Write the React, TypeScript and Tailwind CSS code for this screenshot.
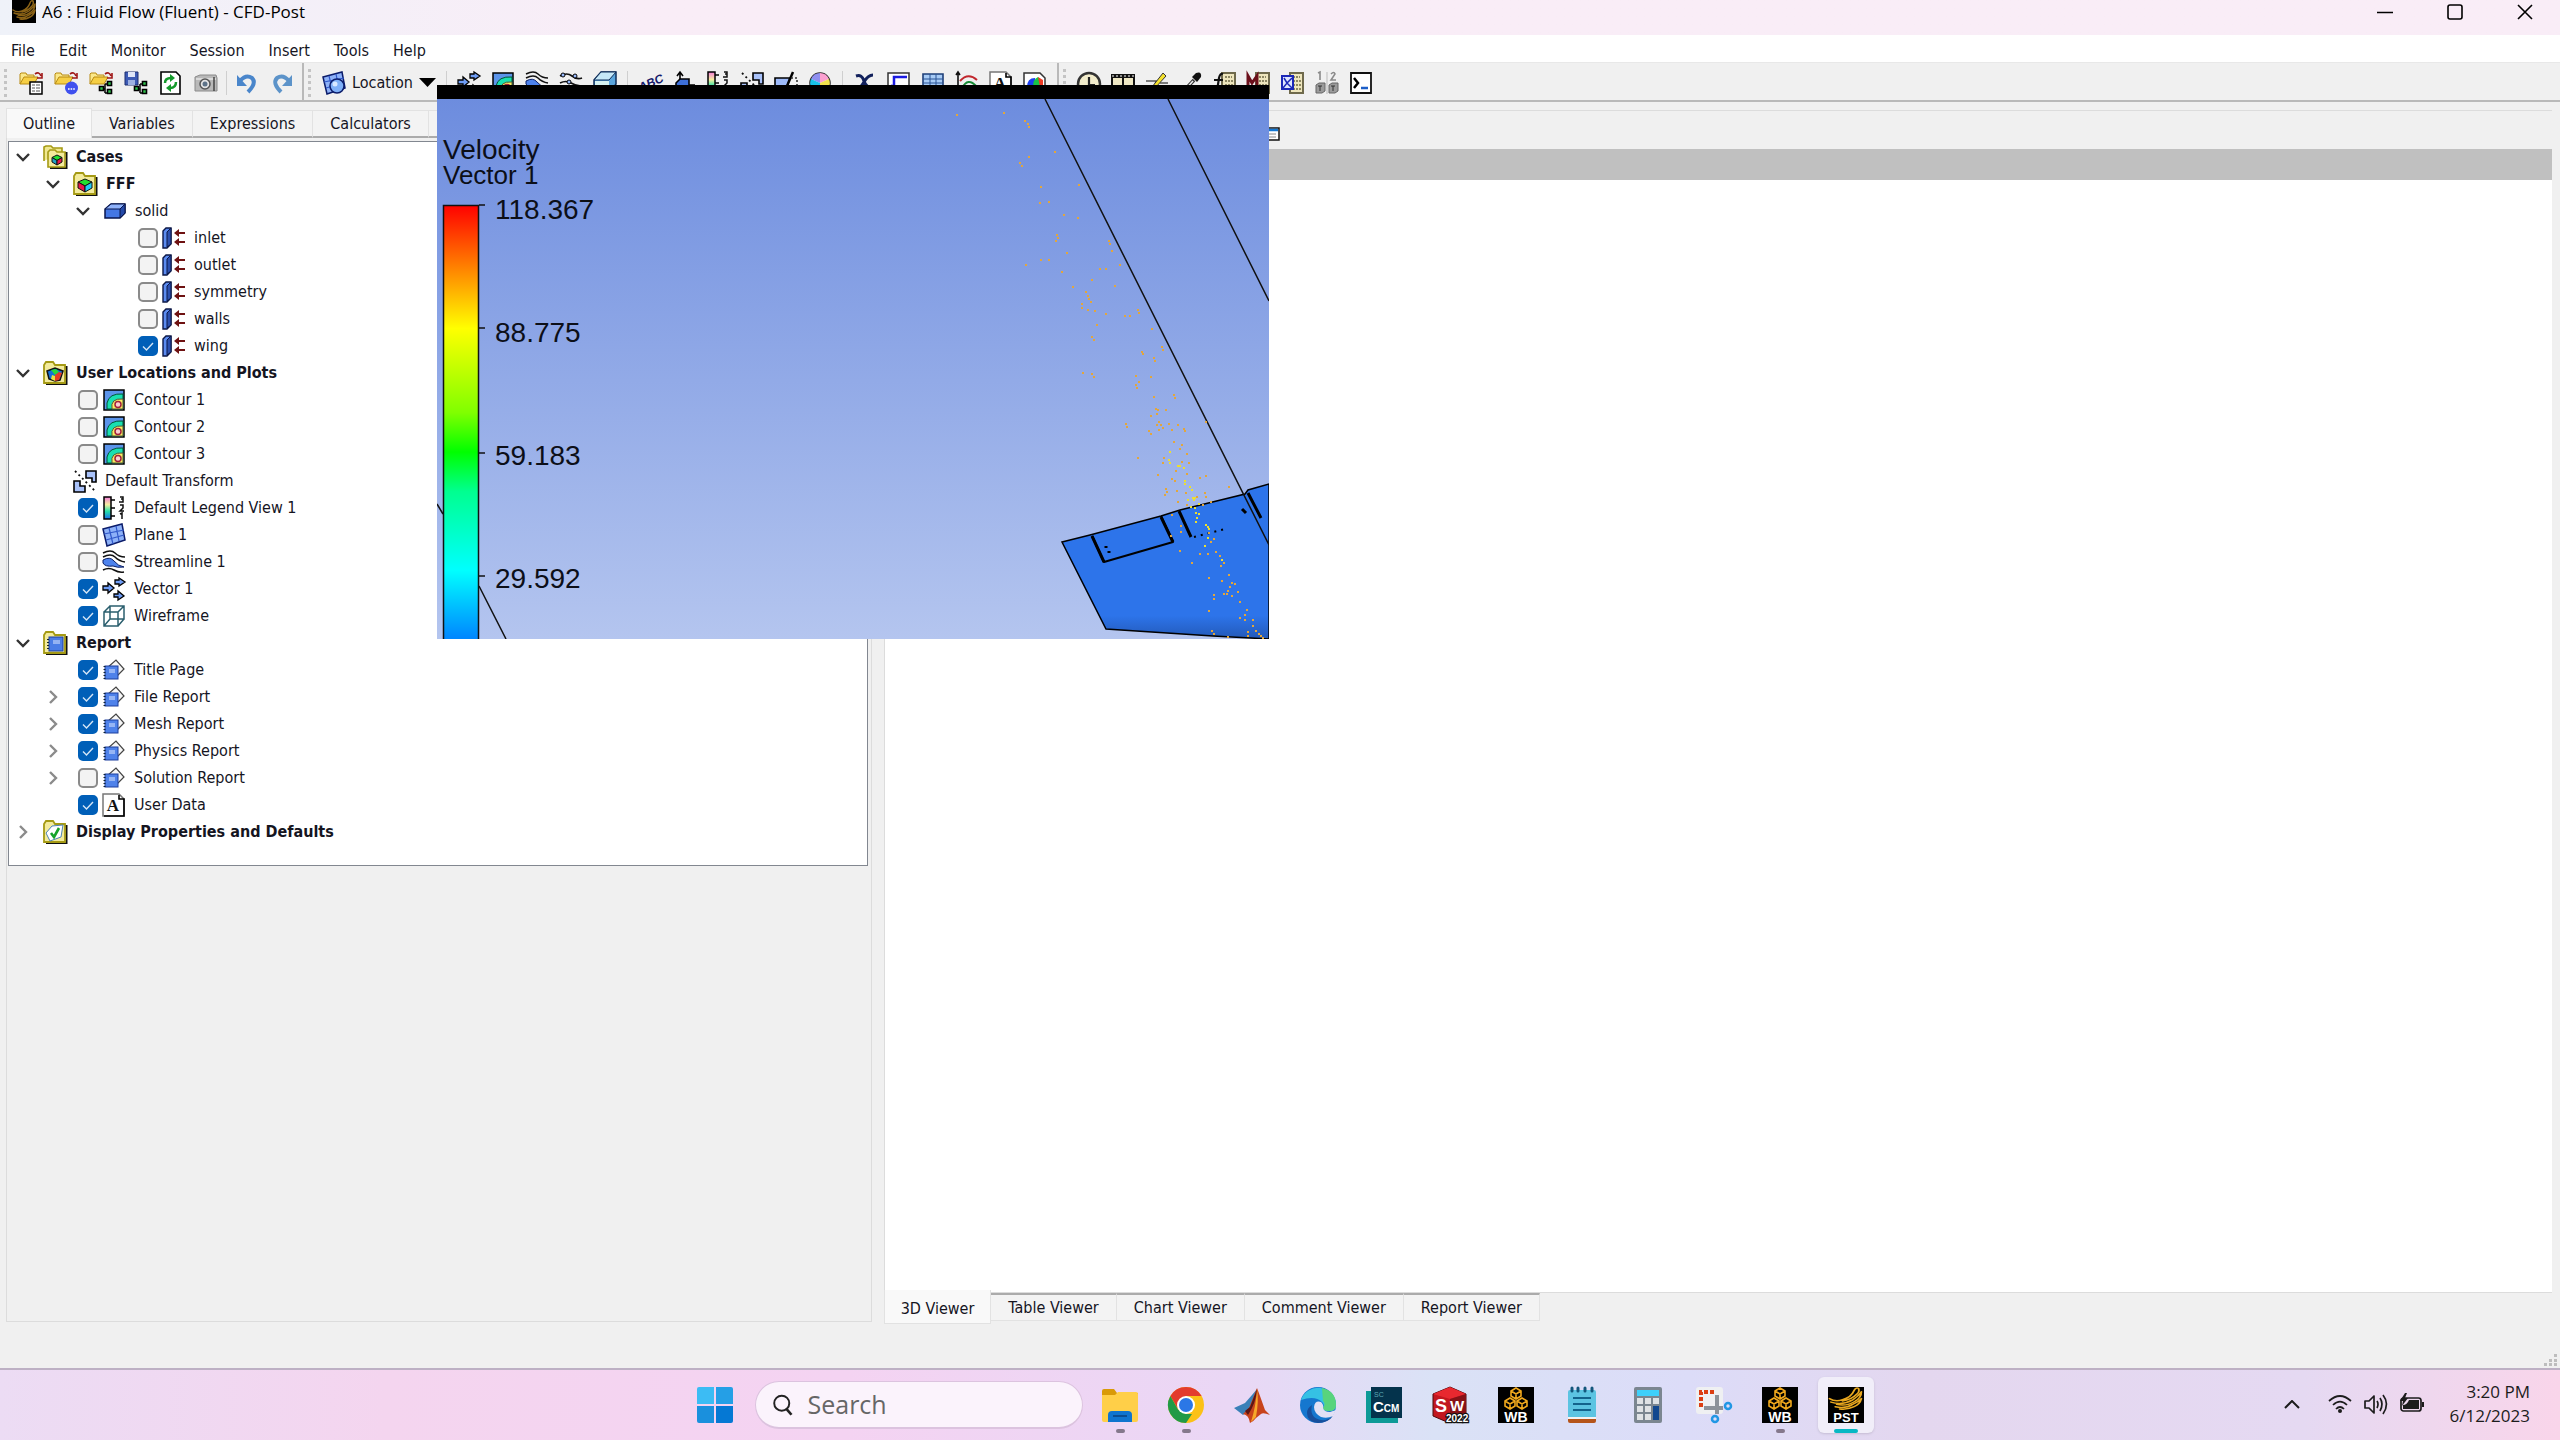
import { useState } from "react";
import type { ReactNode } from "react";

type IconProps = { children: ReactNode; className?: string };

function Icon({ children, className = "size-6 shrink-0 overflow-visible" }: IconProps) {
  return (
    <svg viewBox="0 0 24 24" className={className} fill="none" aria-hidden="true">
      {children}
    </svg>
  );
}

function OpenFolder() {
  return (
    <>
      <path d="M1 13V3l1-1h5l1 2h7v4" fill="#fbe88a" stroke="#b88a12" />
      <path d="M1 13 5 6h14l-4 7z" fill="#f6cf45" stroke="#b88a12" />
      <path d="M16 3q4-3 6 2m1-3v5h-5" stroke="#a01818" strokeWidth="1.6" />
    </>
  );
}

function Network() {
  return (
    <>
      <path d="M13 18h3m0-5v9m0-9h3m-3 9h3" stroke="#000" strokeWidth="1.5" />
      <path d="M10.500 15.500h4v4h-4zM18.500 10.500h4v4h-4zM18.500 18.500h4v4h-4z" fill="#2fc24a" stroke="#000" strokeWidth="1.6" />
    </>
  );
}

// stroke colour and width come from the parent group
const swirl = (
  <g strokeLinecap="round" strokeLinejoin="round">
    <path d="M1 11q4 3 9 1 6-2 8-8 1-3 3-2 1 3-1 5-4 5-10 6" />
    <path d="M2 14q8 3 15-2 4-3 6-7 0 5-4 8-6 5-13 3" />
    <path d="M5 18q7 2 12-2 4-2 6-5-1 5-5 7-5 3-10 2" />
  </g>
);

const contour = (
  <>
    <path d="M2 2h20v20H2z" fill="#5b94ea" stroke="#000" strokeWidth="1.500" />
    <path d="M5 21V15Q7 5 21 6v15z" fill="#19e0b0" stroke="#053" />
    <path d="M10 21q-2-11 11-10v10z" fill="#f6ee62" stroke="#553" />
    <circle cx="16" cy="16.500" r="3" fill="#fbd0d0" stroke="#a3203a" strokeWidth="1.500" />
  </>
);

const streamline = (
  <>
    <path d="M1 10q7-4 11 1 4 5 10 6-7 1-11-1-8 1-10-3z" fill="#4d83ee" stroke="#0a1f66" />
    <path d="M1 3q8-4 12 0t10 4M1 7q8-4 12 0t10 5M1 20q6-3 11 0t10 2" stroke="#111" strokeWidth="1.500" />
  </>
);

const vectors = (
  <path
    d="M1 9h5V6l6 5-6 5v-3H1zM13 3h4V1l6 4-6 4V7h-4zM12 17h4v-3l6 5-6 4v-3h-4z"
    fill="#6f9df5"
    stroke="#000"
    strokeWidth="1.300"
  />
);

const legend = (
  <>
    <rect x="2" y="1" width="7" height="22" fill="url(#legendStrip)" stroke="#000" strokeWidth="1.500" />
    <path d="M9 4h4M9 12h4M9 20h4" stroke="#000" strokeWidth="1.500" />
    <path d="M18 1h3v2h-2 2v3h-4M18 9h3v3l-3 3h4M18 18l2-1v6" stroke="#111" strokeWidth="1.500" />
  </>
);

const transform = (
  <>
    <path d="M13 2h10v11h-4V9h-6zM1 12h6v5h5v6H1z" fill="#a9c2fa" stroke="#000" strokeWidth="1.600" />
    <path d="M2 2l20 20" stroke="#111" strokeWidth="1.800" strokeDasharray="2 3" />
  </>
);

const plane = (
  <>
    <path d="M1 6 20 1l3 16L5 23z" fill="#8db1f8" stroke="#0b1c6a" strokeWidth="1.500" />
    <path d="M2 11l20-4M4 17l18-5M7 5l4 16M14 3l3 15" stroke="#2f57c9" strokeWidth="1.200" />
  </>
);

const wire = (
  <path d="M2 8h14v14H2zM8 2h14v13H8zM2 8l6-6M16 8l6-6M2 22l6-7M16 22l6-7" stroke="#2b5f6e" strokeWidth="1.500" />
);

const solid = (
  <>
    <path d="M2 10 8 5h14v9l-5 5H2z" fill="#4477e4" stroke="#08164d" strokeWidth="1.500" />
    <path d="M2 10 8 5h14l-5 5z" fill="#8fb2fa" stroke="#08164d" />
    <path d="M17 10v9l5-5V5z" fill="#2349a8" stroke="#08164d" />
  </>
);

const boundary = (
  <>
    <path d="M1 5 4 2h5v16l-4 4H1z" fill="#5b8bf0" stroke="#0b1746" strokeWidth="1.400" />
    <path d="M5 6v15l4-3V2z" fill="#2b4fae" stroke="#0b1746" />
    <path d="M14 7h9M14 16h9" stroke="#6e1212" strokeWidth="1.800" />
    <path d="M12 7l5-4v8zM12 16l5-4v8z" fill="#6e1212" />
  </>
);

const folderBase = (
  <>
    <path d="M22 6h1.500v17H3" stroke="#111" strokeWidth="2" />
    <path d="M1 22V4l2-3h7l2 3h10v18z" fill="#f3eb9c" stroke="#a59a14" strokeWidth="1.800" />
  </>
);

const cubeFolder = (
  <>
    {folderBase}
    <path d="M12 7l7 3-7 4-7-4z" fill="#1fe02f" stroke="#111" />
    <path d="M5 10l7 4v6l-7-4z" fill="#e8174b" stroke="#111" />
    <path d="M19 10l-7 4v6l7-4z" fill="#21cdf5" stroke="#111" />
  </>
);

const plotsFolder = (
  <>
    {folderBase}
    <path d="M4 10l8-3 8 3-3 9-5 1-6-2z" fill="#1470d8" stroke="#111" strokeWidth="1.500" />
    <path d="M8 9l5-1 3 3-4 3z" fill="#25d83a" />
    <path d="M12 14l4-3 3 1-3 7-4 1z" fill="#e53c24" />
    <path d="M9 14l3 1v5l-4-2z" fill="#e8e33e" />
  </>
);

const casesFolder = (
  <>
    <path d="M1 16V2l2-1h5l2 2h9v4" fill="#f0e890" stroke="#a59a14" strokeWidth="1.600" />
    <path d="M22 8h1.500v15H7" stroke="#111" strokeWidth="2" />
    <path d="M5 22V7l2-2h5l2 2h8v15z" fill="#f3eb9c" stroke="#a59a14" strokeWidth="1.600" />
    <path d="M14 10l5 2.500-5 3-5-3z" fill="#1fe02f" stroke="#111" />
    <path d="M9 12.500l5 3V20l-5-3z" fill="#21a0c5" stroke="#111" />
    <path d="M19 12.500l-5 3V20l5-3z" fill="#e8174b" stroke="#111" />
  </>
);

const reportFolder = (
  <>
    {folderBase}
    <rect x="6" y="6" width="14" height="14" fill="#4b7de6" stroke="#1c3f9e" />
    <path d="M10 10h7M10 12h7" stroke="#dfe9ff" />
    <path d="M5 8v12" stroke="#123" strokeWidth="2" strokeDasharray="1 2" />
  </>
);

const checkFolder = (
  <>
    {folderBase}
    <path d="M9 6l11-1-2 12-11 4-4-8z" fill="#fff" stroke="#4c82b8" />
    <path d="M8 13l3 4 5-9" stroke="#17a32a" strokeWidth="2.600" />
  </>
);

const reportPage = (
  <>
    <path d="M5 10l9-8 8 9-8 8" fill="#f7f7f7" stroke="#444" strokeWidth="1.200" />
    <rect x="3" y="8" width="13" height="13" fill="#4f82ea" stroke="#1c3f9e" />
    <path d="M7 12h6M7 14h6" stroke="#dfe9ff" />
    <path d="M2.500 8v14" stroke="#123" strokeWidth="2" strokeDasharray="1 2" />
  </>
);

const letterPage = (
  <>
    <path d="M1 1h16l5 5v17H1z" fill="#fff" stroke="#777" strokeWidth="1.500" />
    <path d="M17 2v4h5v17H2" stroke="#000" strokeWidth="1.600" />
    <text x="11" y="18" textAnchor="middle" fontFamily="Liberation Serif, serif" fontSize="17" fontWeight="700" fill="#111">A</text>
  </>
);

const calcPad = (
  <>
    <path d="M9 2h13v20H9z" fill="#eee6bd" stroke="#6f6a4c" strokeWidth="2" />
    <path d="M12 6h7M12 10h8M12 14h8M12 18h8" stroke="#8d8763" strokeWidth="2" strokeDasharray="2 1" />
  </>
);

const fileTools = [
  { name: "Load results", icon: <><OpenFolder /><path d="M11 11h12v12H11z" fill="#fff" stroke="#000" strokeWidth="1.500" /><path d="M13 14h3m1 0h4m-8 3h3m1 0h4m-8 3h3m1 0h4" stroke="#555" /></> },
  { name: "Load state", icon: <><OpenFolder /><circle cx="17.500" cy="17" r="6.500" fill="#3f50ee" /><path d="M14 18h7" stroke="#fff" strokeWidth="1.600" strokeDasharray="1.600 1" /></> },
  { name: "Load session", icon: <><OpenFolder /><Network /></> },
  { name: "Save state", icon: <><path d="M1 1h13v13H1z" fill="#3d5bb5" stroke="#1d2f70" /><path d="M4 1h7v5H4z" fill="#dfe6f8" /><path d="M4 9h7v5H4z" fill="#9fb2e2" /><Network /></> },
  { name: "Refresh", icon: <><path d="M2 1h15l4 4v18H2z" fill="#fff" stroke="#000" strokeWidth="1.600" /><path d="M6 12q0-5 6-5M17 11q0 6-6 6" stroke="#159a2c" strokeWidth="2.500" /><path d="M11 3l5 4-5 4zM12 13l-5 4 5 4z" fill="#159a2c" /></> },
  { name: "Save picture", icon: <><path d="M1 6l5-2h16l1 3v13H1z" fill="#b9b9b9" stroke="#8a8a8a" /><path d="M2 8h20" stroke="#e6e6e6" strokeWidth="1.500" /><circle cx="11" cy="13" r="5" fill="#e4e4e4" stroke="#555" strokeWidth="1.500" /><circle cx="11" cy="13" r="2.500" fill="#5e7388" /><path d="M20 6v14" stroke="#444" strokeWidth="1.500" /></> },
];

const historyTools = [
  { name: "Undo", icon: <><path d="M5 10q6-7 12-3 5 5-4 14" stroke="#4a86cb" strokeWidth="4" /><path d="M2 4v11h10z" fill="#4a86cb" /></> },
  { name: "Redo", icon: <><path d="M19 10q-6-7-12-3-5 5 4 14" stroke="#5c93c9" strokeWidth="4" /><path d="M22 4v11H12z" fill="#5c93c9" /></> },
];

const plotTools = [
  { name: "Vector", icon: vectors },
  { name: "Contour", icon: contour },
  { name: "Streamline", icon: streamline },
  { name: "Particle track", icon: <><path d="M1 5q7-4 12 0t10 2M1 12q6-3 11 0t10 3" stroke="#111" strokeWidth="1.700" /><circle cx="4" cy="4" r="2" fill="#9bf" stroke="#000" /><circle cx="16" cy="5" r="2" fill="#9bf" stroke="#000" /><circle cx="10" cy="11" r="2" fill="#9bf" stroke="#000" /></> },
  { name: "Volume rendering", icon: <><path d="M1 9 8 1h15v12l-7 10H1z" fill="#5aa5dc" stroke="#0e2c58" strokeWidth="1.500" /><path d="M1 9 8 1h15l-7 8z" fill="#c6e8f7" stroke="#0e2c58" /><path d="M2 10h14v12H2z" fill="#d6f2f2" /></> },
];

const annotateTools = [
  { name: "Text", icon: <text x="1" y="19" fontFamily="Liberation Sans, sans-serif" fontSize="12" fontWeight="700" fontStyle="italic" fill="#14186b" transform="rotate(-24 6 16)">ABC</text> },
  { name: "Coordinate frame", icon: <><path d="M8 12V2M5 5l3-4 3 4M16 14h7M2 20l5-4" stroke="#000" strokeWidth="1.600" /><path d="M4 12l4-4h9v9l-4 4H4z" fill="#3d6fd8" stroke="#000" strokeWidth="1.600" /></> },
  { name: "Legend", icon: legend },
  { name: "Instance transform", icon: transform },
  { name: "Clip plane", icon: <><path d="M1 7h15l-5 14H1z" fill="#9dbafa" stroke="#000" strokeWidth="1.600" /><path d="M10 22 19 1" stroke="#000" strokeWidth="2.500" /><path d="M17 7h6v14H12" stroke="#333" strokeWidth="1.600" strokeDasharray="2 2" /></> },
  { name: "Color map", icon: <><circle cx="12" cy="12" r="10" fill="#fff" stroke="#222" strokeWidth="1.500" /><path d="M12 12V2a10 10 0 0 1 9 6z" fill="#fba0d0" /><path d="M12 12 3 8a10 10 0 0 1 9-6z" fill="#8f8ff0" /><path d="M12 12 21 8a10 10 0 0 1-9 14z" fill="#f2e34c" /><path d="M12 12v10A10 10 0 0 1 3 8z" fill="#19c2e8" /></> },
];

const dataTools = [
  { name: "Variable", icon: <path d="M3 5q6-2 8 5t10 8M20 4q-5 0-9 7t-8 8" stroke="#12215c" strokeWidth="3" /> },
  { name: "Expression", icon: <><path d="M1 2h21v20H1z" fill="#fff" stroke="#333" strokeWidth="1.500" /><path d="M4 14l3 5V6h13" stroke="#1a1ae0" strokeWidth="2.500" /></> },
  { name: "Table", icon: <><path d="M2 3h20v18H2z" fill="#a7cbf5" stroke="#1e3f78" strokeWidth="1.600" /><path d="M2 8h20M2 12h20M2 16h20M9 3v18M15 3v18" stroke="#2a5596" /></> },
  { name: "Chart", icon: <><path d="M3 1v22h20M1 4l2-3 2 3" stroke="#111" strokeWidth="1.600" /><path d="M5 10q8-9 17-1" stroke="#c1272d" strokeWidth="2" /><path d="M7 17q6-11 14-2" stroke="#178a35" strokeWidth="2" /></> },
  { name: "Comment", icon: letterPage },
  { name: "Figure", icon: <><path d="M1 2h16l5 5v15H1z" fill="#fff" stroke="#333" strokeWidth="1.500" /><path d="M4 16q0-9 8-9v9z" fill="#1b3ff0" /><path d="M10 16q0-8 5-10l4 4v6z" fill="#18c545" /><path d="M15 6l5 3v7h-3z" fill="#ef3b24" /></> },
];

const utilityTools = [
  { name: "Timestep selector", icon: <><circle cx="12" cy="13" r="11" fill="#f2eccb" stroke="#333" strokeWidth="2.500" /><path d="M12 6v8h6" stroke="#222" strokeWidth="2.200" /></> },
  { name: "Animation", icon: <><path d="M0 3h24v19H0z" fill="#111" /><path d="M2 7h9v11H2zM13 7h9v11h-9z" fill="#efe8c4" /><path d="M1 5h22M1 20h22" stroke="#fff" strokeDasharray="2 2" /></> },
  { name: "Quick editor", icon: <><path d="M1 10h10l-3 11M15 12h8M14 15h8" stroke="#555" strokeWidth="1.500" /><path d="M7 16 18 2l3 3L10 17l-4 2z" fill="#f5e22e" stroke="#333" /></> },
  { name: "Probe", icon: <><path d="M4 21 15 9" stroke="#333" strokeWidth="3.500" /><path d="M5 20 14 10" stroke="#eee" strokeWidth="1.500" /><path d="M13 6l5 5 4-5q1-6-5-4z" fill="#111" /></> },
  { name: "Function calculator", icon: <>{calcPad}<path d="M10 3Q7 2 6 7L4 20H1M1 9h9" stroke="#111" strokeWidth="2.200" /></> },
  { name: "Macro calculator", icon: <>{calcPad}<path d="M1 15V5l4 7 5-7v10" stroke="#6b0f1a" strokeWidth="3" /></> },
  { name: "Mesh calculator", icon: <>{calcPad}<path d="M1 5h11v13H1z" fill="#dfe6ff" stroke="#1b28b8" strokeWidth="2" /><path d="M3 7l3 5 5-5M2 17l4-5 5 5" stroke="#1b28b8" strokeWidth="1.500" /></> },
  { name: "Case comparison", icon: <><path d="M12 1v22" stroke="#bbb" /><path d="M3 2l2-1v8M16 3q3-3 4 0l-4 6h5" stroke="#8a8a8a" strokeWidth="1.600" /><path d="M1 14l3-2h6v8l-3 2H1zM14 14l3-2h6v8l-3 2h-6z" fill="#9b9b9b" stroke="#666" /><path d="M3 15h4M5 15v5M16 15h4M18 15v5" stroke="#333" /></> },
  { name: "Command editor", icon: <><path d="M2 2h20v20H2z" fill="#fff" stroke="#111" strokeWidth="1.800" /><path d="M5 7l4 5-4 5" stroke="#000" strokeWidth="2.500" /><path d="M12 17h7" stroke="#1d5fc8" strokeWidth="2.500" /></> },
];

type TreeItem = {
  label: string;
  level: 0 | 1 | 2 | 3;
  icon: ReactNode;
  open?: boolean;
  checked?: boolean;
  bold?: boolean;
};

const treeItems: TreeItem[] = [
  { label: "Cases", level: 0, icon: casesFolder, open: true, bold: true },
  { label: "FFF", level: 1, icon: cubeFolder, open: true, bold: true },
  { label: "solid", level: 2, icon: solid, open: true },
  { label: "inlet", level: 3, icon: boundary, checked: false },
  { label: "outlet", level: 3, icon: boundary, checked: false },
  { label: "symmetry", level: 3, icon: boundary, checked: false },
  { label: "walls", level: 3, icon: boundary, checked: false },
  { label: "wing", level: 3, icon: boundary, checked: true },
  { label: "User Locations and Plots", level: 0, icon: plotsFolder, open: true, bold: true },
  { label: "Contour 1", level: 1, icon: contour, checked: false },
  { label: "Contour 2", level: 1, icon: contour, checked: false },
  { label: "Contour 3", level: 1, icon: contour, checked: false },
  { label: "Default Transform", level: 1, icon: transform },
  { label: "Default Legend View 1", level: 1, icon: legend, checked: true },
  { label: "Plane 1", level: 1, icon: plane, checked: false },
  { label: "Streamline 1", level: 1, icon: streamline, checked: false },
  { label: "Vector 1", level: 1, icon: vectors, checked: true },
  { label: "Wireframe", level: 1, icon: wire, checked: true },
  { label: "Report", level: 0, icon: reportFolder, open: true, bold: true },
  { label: "Title Page", level: 1, icon: reportPage, checked: true },
  { label: "File Report", level: 1, icon: reportPage, open: false, checked: true },
  { label: "Mesh Report", level: 1, icon: reportPage, open: false, checked: true },
  { label: "Physics Report", level: 1, icon: reportPage, open: false, checked: true },
  { label: "Solution Report", level: 1, icon: reportPage, open: false, checked: false },
  { label: "User Data", level: 1, icon: letterPage, checked: true },
  { label: "Display Properties and Defaults", level: 0, icon: checkFolder, open: false, bold: true },
];

const indent = ["pl-0", "pl-[30px]", "pl-[60px]", "pl-[90px]"];

function TreeRow({ item }: { item: TreeItem }) {
  const [checked, setChecked] = useState(item.checked ?? false);
  const hasBox = item.checked !== undefined;
  const content = (
    <>
      <Icon>{item.icon}</Icon>
      <span className={item.bold ? "ml-[9px] font-bold" : "ml-2"}>{item.label}</span>
    </>
  );

  return (
    <li className={`flex h-[27px] items-center ${indent[item.level]}`}>
      <span className="flex w-[34px] shrink-0 justify-start pl-[7px]">
        {item.open !== undefined && (
          <button type="button" aria-label={`Toggle ${item.label}`} aria-expanded={item.open}>
            <svg viewBox="0 0 14 14" className="size-3.5" fill="none" aria-hidden="true">
              {item.open ? (
                <path d="M1 4l6 6 6-6" stroke="#333" strokeWidth="2.400" />
              ) : (
                <path d="M4 1l6 6-6 6" stroke="#8b8b8b" strokeWidth="2.400" />
              )}
            </svg>
          </button>
        )}
      </span>
      {hasBox ? (
        <label className="flex items-center">
          <span className="mr-1 ml-[5px] grid">
            <input
              type="checkbox"
              checked={checked}
              onChange={(e) => setChecked(e.target.checked)}
              className="peer col-start-1 row-start-1 size-5 appearance-none rounded-[5px] border-2 border-[#8a8a8a] bg-[#f3f3f3] checked:border-[#005fb8] checked:bg-[#005fb8]"
            />
            <svg
              viewBox="0 0 20 20"
              className="pointer-events-none invisible col-start-1 row-start-1 size-5 peer-checked:visible"
              fill="none"
              aria-hidden="true"
            >
              <path d="M5 10.500l3.500 3.500L15 7" stroke="#d5e6f6" strokeWidth="1.400" />
            </svg>
          </span>
          {content}
        </label>
      ) : (
        <span className="flex items-center">{content}</span>
      )}
    </li>
  );
}

function Grip() {
  return (
    <span className="flex h-7 w-1 shrink-0 flex-col justify-between" aria-hidden="true">
      {[0, 1, 2, 3, 4].map((i) => (
        <span key={i} className="size-[3px] bg-[#c4c4c4]" />
      ))}
    </span>
  );
}

function Separator() {
  return <span className="h-6 w-px shrink-0 bg-[#cfcfcf]" />;
}

function Tools({ items }: { items: { name: string; icon: ReactNode }[] }) {
  return (
    <>
      {items.map((t) => (
        <button key={t.name} type="button" aria-label={t.name} className="shrink-0">
          <Icon>{t.icon}</Icon>
        </button>
      ))}
    </>
  );
}

function Toolbar() {
  return (
    <div className="flex h-10 items-stretch border-t border-b-2 border-t-[#e8e8e8] border-b-[#b9b9b9] bg-[#f0f0f0]">
      <div className="flex items-center gap-[11px] border-r-2 border-[#b9b9b9] pt-0.5 pr-2 pl-1">
        <Grip />
        <Tools items={fileTools} />
        <span className="-mx-[3px] h-6 w-px bg-[#cfcfcf]" />
        <Tools items={historyTools} />
      </div>
      <div className="flex items-center gap-2.5 border-r-2 border-[#b9b9b9] pt-0.5 pr-2.5 pl-1">
        <Grip />
        <button type="button" className="flex items-center gap-1.5">
          <Icon>
            {plane}
            <circle cx="15" cy="15" r="7" fill="#7fb0f8" stroke="#0b1c6a" strokeWidth="1.500" />
            <circle cx="13" cy="13" r="2.500" fill="#d9e9ff" />
          </Icon>
          <span>Location</span>
          <svg viewBox="0 0 17 9" className="h-[9px] w-[17px]" aria-hidden="true">
            <path d="M0 0h17L8.500 9z" fill="#000" />
          </svg>
        </button>
        <Separator />
        <Tools items={plotTools} />
        <Separator />
        <Tools items={annotateTools} />
        <Separator />
        <Tools items={dataTools} />
      </div>
      <div className="flex items-center gap-2.5 pt-0.5 pl-1">
        <Grip />
        <Tools items={utilityTools} />
      </div>
    </div>
  );
}

const tracers: [number, number][] = [
  [519, 29], [566, 27], [587, 35], [590, 38], [591, 41], [591, 71], [617, 66], [582, 77], [584, 80], [603, 101],
  [641, 99], [602, 117], [611, 116], [626, 129], [640, 132], [619, 149], [620, 152], [618, 155], [671, 155], [672, 158],
  [674, 165], [629, 167], [603, 174], [611, 174], [588, 179], [682, 179], [662, 183], [668, 183], [624, 186], [654, 194],
  [677, 200], [635, 201], [648, 206], [650, 210], [651, 213], [653, 216], [644, 218], [644, 222], [650, 224], [657, 225],
  [668, 228], [687, 230], [692, 230], [700, 224], [701, 227], [659, 239], [714, 243], [654, 251], [656, 254], [724, 261],
  [725, 264], [704, 266], [705, 268], [716, 272], [717, 275], [645, 287], [654, 288], [656, 291], [698, 290], [713, 291],
  [701, 296], [698, 299], [699, 302], [716, 311], [736, 309], [737, 312], [718, 323], [720, 324], [728, 324], [719, 328],
  [713, 330], [688, 338], [689, 341], [721, 336], [719, 339], [723, 339], [725, 342], [721, 344], [731, 338], [740, 339],
  [734, 344], [746, 343], [747, 345], [711, 345], [713, 348], [768, 336], [736, 356], [744, 359], [742, 363], [749, 368],
  [726, 372], [700, 372], [725, 377], [744, 376], [751, 377], [749, 388], [738, 385], [720, 389], [734, 393], [762, 392],
  [768, 390], [737, 395], [791, 401], [728, 403], [729, 406], [727, 409], [739, 405], [748, 407], [767, 407], [759, 411],
  [740, 416], [749, 419], [765, 419], [768, 411], [773, 416], [734, 429], [743, 440], [743, 446], [733, 450], [771, 447],
  [773, 456], [776, 453], [742, 465], [762, 468], [770, 468], [778, 466], [782, 470], [786, 477], [754, 477], [783, 480],
  [791, 489], [771, 492], [784, 495], [794, 497], [797, 498], [792, 501], [790, 505], [786, 508], [789, 508], [800, 506],
  [794, 510], [776, 509], [776, 513], [802, 516], [771, 525], [809, 524], [807, 529], [802, 532], [807, 534], [815, 534],
  [815, 540], [774, 545], [776, 548], [810, 546], [790, 551], [810, 550], [818, 545], [821, 548], [823, 550], [825, 552],
];

const fastTracers: [number, number][] = [
  [732, 366], [731, 374], [732, 377], [740, 380], [742, 380], [746, 382], [747, 395], [747, 398], [752, 401], [754, 404],
  [755, 412], [757, 412], [756, 414], [750, 414], [753, 421], [757, 422], [761, 418], [758, 427], [761, 428], [759, 432],
  [758, 436], [768, 439], [770, 441], [771, 443], [770, 452], [767, 460], [784, 474],
];

const legendTicks = [
  { y: 120, baseline: 134, value: "118.367" },
  { y: 243, baseline: 257, value: "88.775" },
  { y: 368, baseline: 380, value: "59.183" },
  { y: 491, baseline: 503, value: "29.592" },
];

function VelocityView() {
  return (
    <svg viewBox="0 0 832 554" className="absolute top-[85px] left-[437px] h-[554px] w-[832px]" role="img" aria-label="Velocity vectors">
      <defs>
        <linearGradient id="sky" x1="0" y1="0" x2="0" y2="1">
          <stop offset="0" stopColor="#6b8bde" />
          <stop offset="1" stopColor="#b4c5ef" />
        </linearGradient>
        <linearGradient id="scale" gradientUnits="userSpaceOnUse" x1="0" y1="120" x2="0" y2="614">
          <stop offset="0" stopColor="#ff0000" />
          <stop offset="0.125" stopColor="#ff8000" />
          <stop offset="0.250" stopColor="#ffff00" />
          <stop offset="0.420" stopColor="#80ff00" />
          <stop offset="0.500" stopColor="#00ff00" />
          <stop offset="0.580" stopColor="#00ff90" />
          <stop offset="0.740" stopColor="#00ffff" />
          <stop offset="0.875" stopColor="#0088ff" />
        </linearGradient>
        <linearGradient id="wing" x1="0" y1="0" x2="0" y2="1">
          <stop offset="0" stopColor="#2d74ea" />
          <stop offset="0.850" stopColor="#2d74ea" />
          <stop offset="1" stopColor="#2359b8" />
        </linearGradient>
      </defs>
      <rect width="832" height="554" fill="url(#sky)" />
      <rect width="832" height="14" fill="#000" />
      <path
        d="M625 457l28-7 71-19 19-6 65-16 3-4 21-6v155l-56-3-107-7z"
        fill="url(#wing)"
        stroke="#000"
        strokeWidth="1.500"
      />
      <g stroke="#000" strokeWidth="3" fill="none" strokeLinejoin="round">
        <path d="M655 451l12 26 69-20-12-26" strokeWidth="2" />
        <path d="M655 451l12 26M724 432l12 25M742 426l12 26M811 408l13 25" />
        <path d="M757 452l31-8" strokeWidth="2" strokeDasharray="2 5" />
        <path d="M669 461v2m3 3v2M805 424l4 4" />
      </g>
      <g stroke="#111" strokeWidth="1.500">
        <path d="M608 14l224 446M731 14l101 202M0 419l6 10M42 501l27 53" />
      </g>
      <g fill="#e2a63c">
        {tracers.map(([x, y], i) => (
          <rect key={i} x={x} y={y} width="2" height="2" />
        ))}
      </g>
      <g fill="#ecdf30">
        {fastTracers.map(([x, y], i) => (
          <rect key={i} x={x} y={y} width="2" height="2" />
        ))}
      </g>
      <rect x="6.500" y="120.500" width="35" height="450" fill="url(#scale)" stroke="#111" strokeWidth="1.500" />
      <g fontFamily="Liberation Sans, Arial, sans-serif" fill="#0c0f18">
        <text x="6" y="74" fontSize="28">Velocity</text>
        <text x="6" y="99" fontSize="26">Vector 1</text>
        {legendTicks.map((t) => (
          <g key={t.value}>
            <path d={`M42 ${t.y}h6`} stroke="#111" strokeWidth="1.500" />
            <text x="58" y={t.baseline} fontSize="28">{t.value}</text>
          </g>
        ))}
      </g>
    </svg>
  );
}

function Workbench() {
  return (
    <>
      <path d="M0 0h36v36H0z" fill="#000" />
      <path
        d="M18 1l5 3v5l-5 3-5-3V4zM12 11l5 3v5l-5 3-5-3v-5zM24 11l5 3v5l-5 3-5-3v-5zM13 4l5 3 5-3M18 7v5M7 14l5 3 5-3M12 17v5M19 14l5 3 5-3M24 17v5"
        stroke="#f0a81c"
        strokeWidth="1.600"
      />
      <text x="18" y="35" textAnchor="middle" fontFamily="Liberation Sans, Arial, sans-serif" fontSize="14" fontWeight="700" fill="#fff">WB</text>
    </>
  );
}

const apps: { name: string; icon: ReactNode; state?: "running" | "active" }[] = [
  {
    name: "File Explorer",
    state: "running",
    icon: (
      <>
        <path d="M0 4q0-2 2-2h10l3 4h21v6H0z" fill="#d99a08" />
        <path d="M0 8h13l3-3h18q2 0 2 2v26q0 2-2 2H2q-2 0-2-2z" fill="#ffcf48" />
        <path d="M6 35v-7q0-4 4-4h16q4 0 4 4v7z" fill="#0f74cf" />
        <path d="M11 29h14" stroke="#0a4d92" strokeWidth="2" />
      </>
    ),
  },
  {
    name: "Chrome",
    state: "running",
    icon: (
      <>
        <circle cx="18" cy="18" r="18" fill="#fbc116" />
        <path d="M2.400 9A18 18 0 0 1 33.600 9H18l-8 13z" fill="#e33b2e" />
        <path d="M2.400 9 10 22.500l8 4.500h6l-6 9A18 18 0 0 1 2.400 9z" fill="#229a47" />
        <circle cx="18" cy="18" r="9" fill="#fff" />
        <circle cx="18" cy="18" r="7" fill="#2b77e6" />
      </>
    ),
  },
  {
    name: "MATLAB",
    icon: (
      <>
        <path d="M0 21l11-5 7-8 5-6-7 20-7 6z" fill="#3a80b8" />
        <path d="M9 27l6-6q4-10 8-20l3 8 5 14 5 5q-7-3-9-1l-5 4q-3 4-6 5-1-8-7-9z" fill="#c8431c" />
        <path d="M23 2q2 12-1 28l-5 5q5-16 6-33z" fill="#f7a82a" />
        <path d="M11 24l5-4q3-8 7-18-1 14-9 26z" fill="#5e1614" />
      </>
    ),
  },
  {
    name: "Edge",
    icon: (
      <>
        <circle cx="18" cy="18" r="18" fill="#1577cf" />
        <path d="M1 13A18 18 0 0 1 36 18q0 6-7 6-6 0-6-3 2-3-1-6-7-7-21-2z" fill="#35c1e4" />
        <path d="M22 1q14 3 14 17 0 6-7 6-6 0-6-3 3-4 0-7z" fill="#58d47c" />
        <path d="M12 18q-3 13 9 15 6 1 12-4-5 7-15 7Q7 35 7 26q0-5 5-8z" fill="#174f9c" />
        <path d="M14 20q1-7 7-5 3 3 2 6 1 4 7 4l6-2-3 6q-6 3-12 1-7-4-7-10z" fill="#e2e0f5" />
      </>
    ),
  },
  {
    name: "STAR-CCM+",
    icon: (
      <>
        <path d="M0 4h32v32H0z" fill="#0d9a97" />
        <path d="M5 0h31v31H5z" fill="#04334c" />
        <g fontFamily="Liberation Sans, Arial, sans-serif">
          <text x="8" y="10" fontSize="7" fill="#5ca7b5">SC</text>
          <text x="7" y="25" fontSize="15" fontWeight="700" fill="#fff">C<tspan fontSize="10">CM</tspan></text>
        </g>
      </>
    ),
  },
  {
    name: "SolidWorks",
    icon: (
      <>
        <path d="M1 7 18 0l16 7v22L15 35 1 29z" fill="#c21820" stroke="#4c0a0d" />
        <path d="M1 7 18 0l16 7-16 5z" fill="#e8282f" />
        <path d="M18 12l16-5v22l-16 6z" fill="#861217" />
        <g fontFamily="Liberation Sans, Arial, sans-serif" fontWeight="700" fill="#fff">
          <text x="3" y="25" fontSize="18">S</text>
          <text x="18" y="24" fontSize="15">W</text>
          <text x="14" y="35" fontSize="10" stroke="#111" strokeWidth="2.500" paintOrder="stroke">2022</text>
        </g>
      </>
    ),
  },
  { name: "Workbench", icon: <Workbench /> },
  {
    name: "Notepad",
    icon: (
      <>
        <path d="M4 30h28v4q0 2-2 2H6q-2 0-2-2z" fill="#b5541a" />
        <path d="M4 27h28v5H4z" fill="#f3f3f3" />
        <path d="M4 5q0-2 2-2h24q2 0 2 2v25H4z" fill="#5cc4e2" />
        <path d="M8 1v3M14 1v3M21 1v3M28 1v3" stroke="#13577c" strokeWidth="3" strokeLinecap="round" />
        <path d="M9 11h18M9 17h18M9 23h18" stroke="#13638c" strokeWidth="2" />
      </>
    ),
  },
  {
    name: "Calculator",
    icon: (
      <>
        <rect x="4" width="28" height="36" rx="2" fill="#7b8690" />
        <path d="M7 3h22v6H7z" fill="#3fd0fa" />
        <path d="M7 11h6v6H7zM15 11h6v6h-6zM23 11h6v6h-6zM7 19h6v6H7zM15 19h6v6h-6zM7 27h6v6H7zM15 27h6v6h-6z" fill="#dfe2e5" />
        <path d="M23 19h6v14h-6z" fill="#12488f" />
      </>
    ),
  },
  {
    name: "Snipping Tool",
    icon: (
      <>
        <rect width="27" height="27" rx="3" fill="#eff0f2" />
        <path d="M5 20V5h15" stroke="#dc3e12" strokeWidth="4" strokeDasharray="4 2" />
        <path d="M21 8v19M8 21h19" stroke="#8c9299" strokeWidth="4" />
        <circle cx="32" cy="19" r="3" stroke="#2197e4" strokeWidth="2.500" />
        <circle cx="19" cy="32" r="3" stroke="#2197e4" strokeWidth="2.500" />
      </>
    ),
  },
  { name: "Workbench project", icon: <Workbench />, state: "running" },
  {
    name: "CFD-Post",
    state: "active",
    icon: (
      <>
        <path d="M0 0h36v36H0z" fill="#000" />
        <g stroke="#e9a71e" strokeWidth="1.300" transform="translate(0 -1) scale(1.450 1.150)">{swirl}</g>
        <text x="18" y="35" textAnchor="middle" fontFamily="Liberation Sans, Arial, sans-serif" fontSize="13" fontWeight="700" fill="#fff">PST</text>
      </>
    ),
  },
];

function Taskbar() {
  return (
    <footer className="flex h-[72px] shrink-0 items-stretch border-t-2 border-[#bdb0c4] bg-[linear-gradient(90deg,#ecdcf4_0%,#f4d5ef_15%,#f4d3f2_33%,#ead7f5_48%,#dae2f6_56%,#dcdcf8_66%,#e4d7ef_75%,#e5d9f2_90%,#f9d5ea_100%)] font-['Open_Sans',sans-serif]">
      <div className="flex flex-1 items-center justify-center pl-[292px]">
        <button type="button" aria-label="Start" className="mr-[22px]">
          <svg viewBox="0 0 36 36" className="size-9" aria-hidden="true">
            <path d="M0 2q0-2 2-2h15v17H0z" fill="#3cbcf4" />
            <path d="M19 0h15q2 0 2 2v15H19z" fill="#259fe6" />
            <path d="M0 19h17v17H2q-2 0-2-2z" fill="#1a90dd" />
            <path d="M19 19h17v15q0 2-2 2H19z" fill="#0578d4" />
          </svg>
        </button>
        <label className="mr-1 flex h-12 w-[328px] items-center rounded-full border border-b-2 border-[#dcc3df] bg-[#fbf3fc] pl-4">
          <svg viewBox="0 0 24 24" className="size-6" fill="none" aria-hidden="true">
            <circle cx="11" cy="10" r="8.500" stroke="#222" strokeWidth="2.200" />
            <path d="M16 16l6 7" stroke="#222" strokeWidth="3" />
          </svg>
          <input
            type="text"
            aria-label="Search"
            placeholder="Search"
            className="ml-3.5 w-full min-w-0 bg-transparent text-[25px] outline-none placeholder:text-[#666]"
          />
        </label>
        {apps.map((app) => (
          <button key={app.name} type="button" aria-label={app.name} className="flex w-[66px] shrink-0 justify-center">
            <span
              className={`flex h-14 w-14 flex-col items-center rounded-md pt-2.5 ${app.state === "active" ? "bg-[#f1eef9] shadow-sm" : ""}`}
            >
              <svg viewBox="0 0 36 36" className="size-9 shrink-0 overflow-visible" fill="none" aria-hidden="true">
                {app.icon}
              </svg>
              {app.state === "running" && <span className="mt-1.5 h-[5px] w-[9px] rounded-full bg-[#85788c]" />}
              {app.state === "active" && <span className="mt-1.5 h-[5px] w-6 rounded-full bg-[#07b8c4]" />}
            </span>
          </button>
        ))}
      </div>
      <div className="flex items-center pr-[30px] pb-0.5 text-[#1c1c1c]">
        <button type="button" aria-label="Show hidden icons" className="mr-7">
          <svg viewBox="0 0 16 9" className="h-[9px] w-4" fill="none" aria-hidden="true">
            <path d="M1 8l7-7 7 7" stroke="#1c1c1c" strokeWidth="2" />
          </svg>
        </button>
        <button type="button" aria-label="Quick settings" className="mr-[25px] flex gap-3">
          <Icon>
            <path d="M1 9q11-10 22 0M5 13q7-7 14 0M8 17q4-4 8 0" stroke="#1c1c1c" strokeWidth="1.700" />
            <circle cx="12" cy="19" r="2" fill="#1c1c1c" />
          </Icon>
          <Icon>
            <path d="M1 9h4l5-5v17l-5-5H1z" stroke="#1c1c1c" strokeWidth="1.700" strokeLinejoin="round" />
            <path d="M13 9q2 3 0 7M16 6q4 6 0 13M19 3q7 9 0 19" stroke="#1c1c1c" strokeWidth="1.700" />
          </Icon>
          <Icon>
            <rect x="1" y="6" width="20" height="13" rx="2.500" stroke="#1c1c1c" strokeWidth="1.700" />
            <path d="M9 8h10v9H3v-4q4 0 6-5z" fill="#1c1c1c" />
            <path d="M22 10h2v5h-2zM5 1 0 9h3l-1 5 6-8H5l2-5z" fill="#1c1c1c" />
          </Icon>
        </button>
        <div className="text-right text-[17px] leading-6">
          <div>3:20 PM</div>
          <div>6/12/2023</div>
        </div>
      </div>
    </footer>
  );
}

const menus = ["File", "Edit", "Monitor", "Session", "Insert", "Tools", "Help"];
const sideTabs = ["Variables", "Expressions", "Calculators"];
const viewerTabs = ["Table Viewer", "Chart Viewer", "Comment Viewer", "Report Viewer"];

export default function App() {
  return (
    <div className="relative flex h-screen w-full flex-col overflow-hidden bg-[#f0f0f0] font-['DejaVu_Sans_Condensed','DejaVu_Sans',sans-serif] text-base text-[#15151f]">
      <svg className="absolute size-0" aria-hidden="true">
        <defs>
          <linearGradient id="legendStrip" x1="0" y1="0" x2="0" y2="1">
            <stop offset="0" stopColor="#f47ad8" />
            <stop offset="0.350" stopColor="#f6f0a0" />
            <stop offset="0.650" stopColor="#25e0a8" />
            <stop offset="1" stopColor="#1c6cf0" />
          </linearGradient>
        </defs>
      </svg>

      <header className="flex h-[35px] shrink-0 items-start bg-linear-to-r from-[#eff2f9] to-[#f9edf7] to-25% pl-3 font-['Open_Sans',sans-serif] text-black">
        <svg viewBox="0 0 24 24" className="mt-[-1px] size-6" fill="none" aria-hidden="true">
          <path d="M0 0h24v24H0z" fill="#000" />
          <g stroke="#8a6216" strokeWidth="1.500">{swirl}</g>
        </svg>
        <h1 className="ml-1.5 flex-1 text-[17px] leading-6">A6 : Fluid Flow (Fluent) - CFD-Post</h1>
        <button type="button" aria-label="Minimize" className="flex h-6 w-[70px] items-center justify-center">
          <svg viewBox="0 0 16 16" className="size-4" fill="none"><path d="M0 8.500h16" stroke="#000" strokeWidth="1.500" /></svg>
        </button>
        <button type="button" aria-label="Maximize" className="flex h-6 w-[70px] items-center justify-center">
          <svg viewBox="0 0 16 16" className="size-4" fill="none"><rect x="1" y="1" width="14" height="14" rx="2" stroke="#000" strokeWidth="1.600" /></svg>
        </button>
        <button type="button" aria-label="Close" className="flex h-6 w-[70px] items-center justify-center">
          <svg viewBox="0 0 16 16" className="size-4" fill="none"><path d="M1 1l14 14M15 1 1 15" stroke="#000" strokeWidth="1.600" /></svg>
        </button>
      </header>

      <nav className="flex h-[27px] shrink-0 items-center gap-6 bg-white pt-1 pl-[11px]">
        {menus.map((m) => (
          <button key={m} type="button">{m}</button>
        ))}
      </nav>

      <Toolbar />

      <main className="flex min-h-0 flex-1 gap-3 pr-2 pb-11 pl-1.5">
        <section className="flex w-[34%] flex-col pt-1.5 pb-0.5">
          <div role="tablist" className="flex h-[30px] items-end">
            <button type="button" role="tab" aria-selected="true" className="h-[30px] w-[86px] border border-b-0 border-[#e2e2e2] bg-[#f9f9f9]">
              Outline
            </button>
            {sideTabs.map((t) => (
              <button key={t} type="button" role="tab" aria-selected="false" className="h-7 border-t border-r border-b-2 border-[#e2e2e2] border-b-[#ababab] bg-[#f3f3f3] px-[17px] pt-px">
                {t}
              </button>
            ))}
            <span className="h-7 w-20 border-t border-b-2 border-[#e2e2e2] border-b-[#ababab] bg-[#f3f3f3]" />
          </div>
          <div className="flex-1 border border-t-0 border-[#dcdcdc] pt-[3px] pr-[3px] pl-px">
            <ul className="border border-[#828790] bg-white pt-px pb-5">
              {treeItems.map((item) => (
                <TreeRow key={item.label} item={item} />
              ))}
            </ul>
          </div>
        </section>

        <section className="flex min-w-0 flex-1 flex-col pt-2">
          <div className="flex h-[39px] shrink-0 items-center border-t border-[#dcdcdc] pl-[380px]">
            <svg viewBox="0 0 16 14" className="mt-[7px] h-3.5 w-4" fill="none" aria-hidden="true">
              <path d="M1 1h14v12H1z" fill="#fff" stroke="#111" strokeWidth="1.500" />
              <path d="M2 3h12" stroke="#1478d4" strokeWidth="2.500" />
              <path d="M3 7h9M3 10h9" stroke="#888" />
            </svg>
          </div>
          <div className="h-[31px] shrink-0 bg-[#c0c0c0]" />
          <div className="flex-1 border-b border-l border-[#dcdcdc] bg-white" />
          <div role="tablist" className="flex h-[31px] shrink-0 items-start">
            <button type="button" role="tab" aria-selected="true" className="-mt-[3px] h-[34px] border border-t-0 border-[#e2e2e2] bg-[#f9f9f9] px-4 pt-1">
              3D Viewer
            </button>
            {viewerTabs.map((t) => (
              <button key={t} type="button" role="tab" aria-selected="false" className="h-7 border-t-2 border-r border-b border-[#e2e2e2] border-t-[#ababab] bg-[#f3f3f3] px-[17px]">
                {t}
              </button>
            ))}
          </div>
        </section>
      </main>

      <svg viewBox="0 0 16 16" className="absolute right-0 bottom-[72px] size-4" aria-hidden="true">
        <path d="M0 11h3v3H0zM5 11h3v3H5zM5 7h3v3H5zM10 11h3v3h-3zM10 7h3v3h-3zM10 2h3v3h-3z" fill="#bdbdbd" />
      </svg>

      <VelocityView />
      <Taskbar />
    </div>
  );
}
